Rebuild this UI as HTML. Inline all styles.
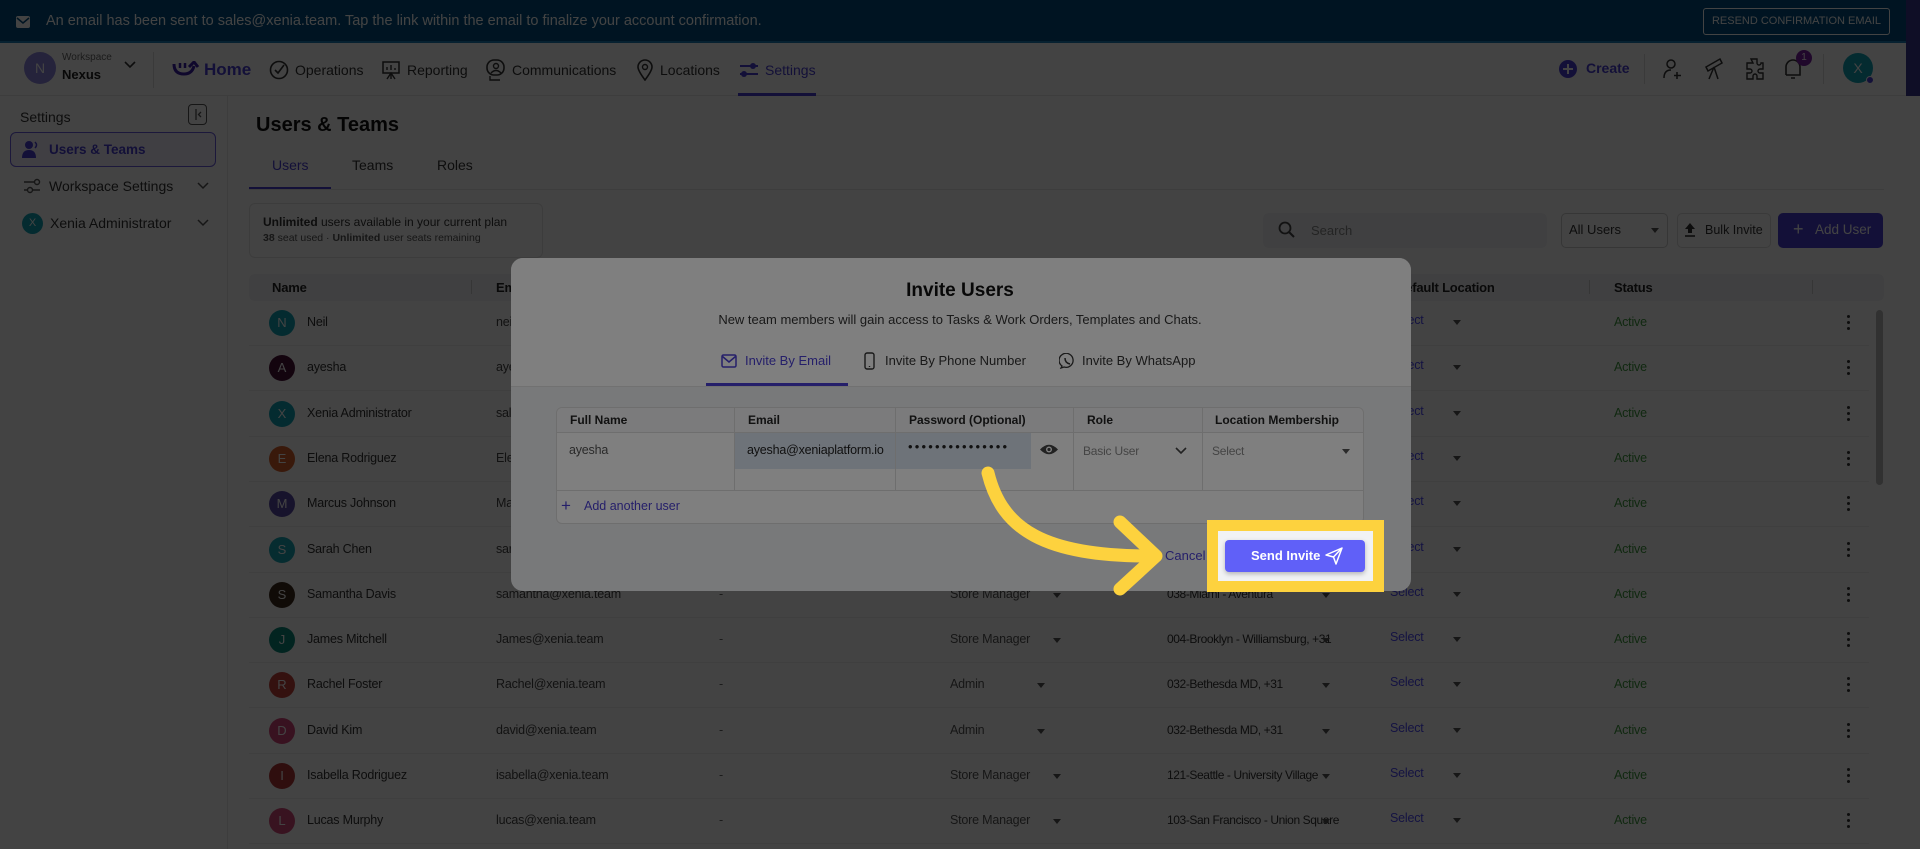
<!DOCTYPE html>
<html><head><meta charset="utf-8"><style>
*{box-sizing:border-box;margin:0;padding:0}
body{width:1920px;height:849px;overflow:hidden;background:#fff;font-family:"Liberation Sans",sans-serif;color:#212121;position:relative}
.a{position:absolute;white-space:nowrap}
.nav{font-size:14px;color:#333;top:62px}
.av{position:absolute;width:26px;height:26px;border-radius:50%;color:#fff;font-size:13px;text-align:center;line-height:26px}
.cell{position:absolute;font-size:12.5px;color:#333;white-space:nowrap;letter-spacing:-0.2px}
.tri{position:absolute;width:0;height:0;border-left:4px solid transparent;border-right:4px solid transparent;border-top:5px solid #555}
.mh{position:absolute;top:407px;height:26px;line-height:26px;font-size:12px;font-weight:bold;color:#222}
</style></head><body>

<!-- Banner -->
<div class="a" style="left:0;top:0;width:1920px;height:43px;background:#014f80;border-bottom:2px solid #1b7db5"></div>
<svg class="a" style="left:16px;top:16px" width="14" height="12"><rect x="0" y="0" width="14" height="12" rx="2" fill="#fff"/><path d="M1 2 L7 7 L13 2" stroke="#014f80" stroke-width="1.5" fill="none"/></svg>
<div class="a" style="left:46px;top:13px;font-size:14.5px;color:#fff">An email has been sent to sales@xenia.team. Tap the link within the email to finalize your account confirmation.</div>
<div class="a" style="left:1703px;top:8px;width:187px;height:27px;border:1px solid #fff;border-radius:3px;color:#fff;font-size:11px;text-align:center;line-height:25px">RESEND CONFIRMATION EMAIL</div>
<div class="a" style="left:1906px;top:0;width:14px;height:96px;background:#3a3590"></div>

<!-- Nav -->
<div class="a" style="left:0;top:43px;width:1906px;height:53px;background:#fff;border-bottom:1px solid #e6e6e6"></div>
<div class="a" style="left:24px;top:52px;width:32px;height:32px;border-radius:50%;background:#8f86e0;color:#fff;font-size:14px;text-align:center;line-height:32px">N</div>
<div class="a" style="left:62px;top:52px;font-size:10px;color:#666">Workspace</div>
<div class="a" style="left:62px;top:67px;font-size:13px;font-weight:bold">Nexus</div>
<svg class="a" style="left:124px;top:61px" width="12" height="8"><path d="M1 1 L6 6 L11 1" stroke="#333" stroke-width="1.6" fill="none"/></svg>
<div class="a" style="left:153px;top:52px;width:1px;height:36px;background:#ddd"></div>
<svg class="a" style="left:172px;top:61px" width="28" height="16"><path d="M2 3 Q2 13 12 13 Q20 13 22 5" stroke="#3c1fa8" stroke-width="3" fill="none"/><path d="M17 6 L22 1 L26 6" stroke="#3c1fa8" stroke-width="3" fill="none"/><path d="M8 2 v5 M13 2 v5" stroke="#3c1fa8" stroke-width="2.5"/></svg>
<div class="a" style="left:204px;top:60px;font-size:17px;color:#4b3fd4;font-weight:bold">Home</div>
<svg class="a" style="left:269px;top:60px" width="20" height="20"><circle cx="10" cy="10" r="8.5" stroke="#333" stroke-width="1.6" fill="none"/><path d="M6 10 L9 13 L15 5" stroke="#333" stroke-width="1.6" fill="none"/></svg>
<div class="a nav" style="left:295px">Operations</div>
<svg class="a" style="left:382px;top:60px" width="18" height="20"><rect x="1" y="2" width="16" height="11" stroke="#333" stroke-width="1.5" fill="none"/><path d="M5 10v-3M9 10v-5M13 10v-2M9 13v6M5 19l4-6 4 6" stroke="#333" stroke-width="1.4" fill="none"/></svg>
<div class="a nav" style="left:407px">Reporting</div>
<svg class="a" style="left:486px;top:59px" width="20" height="22"><rect x="1" y="1" width="17" height="15" rx="7" stroke="#333" stroke-width="1.6" fill="none"/><circle cx="10" cy="7" r="2.5" stroke="#333" stroke-width="1.4" fill="none"/><path d="M5 14 Q10 9 15 14 M4 17v4h10" stroke="#333" stroke-width="1.4" fill="none"/></svg>
<div class="a nav" style="left:512px">Communications</div>
<svg class="a" style="left:637px;top:59px" width="16" height="22"><path d="M8 21 C2 13 1 10 1 8 A7 7 0 0 1 15 8 C15 10 14 13 8 21Z" stroke="#333" stroke-width="1.6" fill="none"/><circle cx="8" cy="8" r="2.5" stroke="#333" stroke-width="1.4" fill="none"/></svg>
<div class="a nav" style="left:660px">Locations</div>
<svg class="a" style="left:739px;top:61px" width="20" height="18"><path d="M1 5h18M1 13h18" stroke="#4b3fd4" stroke-width="2"/><circle cx="14" cy="5" r="3" fill="#4b3fd4"/><circle cx="5" cy="13" r="3" fill="#4b3fd4"/></svg>
<div class="a nav" style="left:765px;color:#4b3fd4">Settings</div>
<div class="a" style="left:738px;top:93px;width:78px;height:3px;background:#4b3fd4"></div>

<svg class="a" style="left:1559px;top:60px" width="18" height="18"><circle cx="9" cy="9" r="9" fill="#4b3fd4"/><path d="M9 4v10M4 9h10" stroke="#fff" stroke-width="2"/></svg>
<div class="a" style="left:1586px;top:60px;font-size:14px;font-weight:bold;color:#4b3fd4">Create</div>
<div class="a" style="left:1644px;top:54px;width:1px;height:30px;background:#ddd"></div>
<svg class="a" style="left:1662px;top:58px" width="22" height="22"><circle cx="9" cy="6" r="4" stroke="#333" stroke-width="1.5" fill="none"/><path d="M2 20 Q2 12 9 12 M15 14v7M12 17.5h7" stroke="#333" stroke-width="1.5" fill="none"/></svg>
<svg class="a" style="left:1703px;top:57px" width="22" height="24"><path d="M3 10 L17 2 L19 6 L5 14Z M11 10 L6 22 M11 10 L15 22" stroke="#333" stroke-width="1.5" fill="none"/></svg>
<svg class="a" style="left:1743px;top:57px" width="22" height="24"><path d="M8 2 h6 v4 a2 2 0 0 0 4 0 h2 v6 h-3 a2 2 0 0 0 0 4 h3 v6 h-6 v-3 a2 2 0 0 0 -4 0 v3 h-6 v-6 h3 a2 2 0 0 0 0 -4 h-3 v-6 h6Z" stroke="#333" stroke-width="1.4" fill="none"/></svg>
<svg class="a" style="left:1783px;top:57px" width="20" height="24"><path d="M3 18 V10 A7 7 0 0 1 17 10 V18 H3 M8 21h4" stroke="#333" stroke-width="1.6" fill="none"/></svg>
<div class="a" style="left:1796px;top:50px;width:16px;height:16px;border-radius:50%;background:#7b1fa2;color:#fff;font-size:10px;text-align:center;line-height:16px">1</div>
<div class="a" style="left:1823px;top:54px;width:1px;height:30px;background:#ddd"></div>
<div class="a" style="left:1843px;top:53px;width:30px;height:30px;border-radius:50%;background:#12a4b8;color:#fff;font-size:14px;text-align:center;line-height:30px">X</div>
<div class="a" style="left:1866px;top:76px;width:8px;height:8px;border-radius:50%;background:#4b3fd4;border:1px solid #fff"></div>

<!-- Sidebar -->
<div class="a" style="left:227px;top:96px;width:1px;height:753px;background:#e6e6e6"></div>
<div class="a" style="left:20px;top:109px;font-size:14px;color:#333">Settings</div>
<div class="a" style="left:188px;top:104px;width:19px;height:21px;border:1.5px solid #555;border-radius:4px"></div>
<svg class="a" style="left:193px;top:109px" width="10" height="11"><path d="M3 0v11M8 3 L5.5 5.5 L8 8" stroke="#555" stroke-width="1.3" fill="none"/></svg>
<div class="a" style="left:10px;top:132px;width:206px;height:35px;border:1.5px solid #6a5de0;border-radius:6px;background:#f1efff"></div>
<svg class="a" style="left:22px;top:140px" width="18" height="18"><circle cx="7" cy="5" r="4" fill="#4b3fd4"/><path d="M0 18 Q0 10 7 10 Q14 10 14 18Z" fill="#4b3fd4"/><path d="M13 2 Q16 5 13 8" stroke="#4b3fd4" stroke-width="1.5" fill="none"/></svg>
<div class="a" style="left:49px;top:142px;font-size:13.5px;font-weight:bold;color:#4b3fd4">Users &amp; Teams</div>
<svg class="a" style="left:23px;top:178px" width="18" height="16"><path d="M1 4h10M1 12h3" stroke="#555" stroke-width="1.5"/><circle cx="14" cy="4" r="2.5" stroke="#555" stroke-width="1.4" fill="none"/><circle cx="7" cy="12" r="2.5" stroke="#555" stroke-width="1.4" fill="none"/><path d="M10 12h7" stroke="#555" stroke-width="1.5"/></svg>
<div class="a" style="left:49px;top:178px;font-size:14px;color:#333">Workspace Settings</div>
<svg class="a" style="left:197px;top:182px" width="12" height="8"><path d="M1 1 L6 6 L11 1" stroke="#555" stroke-width="1.5" fill="none"/></svg>
<div class="a" style="left:22px;top:213px;width:21px;height:21px;border-radius:50%;background:#12a4b8;color:#fff;font-size:11px;text-align:center;line-height:21px">X</div>
<div class="a" style="left:50px;top:215px;font-size:14px;color:#333">Xenia Administrator</div>
<svg class="a" style="left:197px;top:219px" width="12" height="8"><path d="M1 1 L6 6 L11 1" stroke="#555" stroke-width="1.5" fill="none"/></svg>

<!-- Main -->
<div class="a" style="left:256px;top:114px;font-size:20px;font-weight:bold;color:#111">Users &amp; Teams</div>
<div class="a" style="left:272px;top:157px;font-size:14px;color:#4b3fd4">Users</div>
<div class="a" style="left:352px;top:157px;font-size:14px;color:#333">Teams</div>
<div class="a" style="left:437px;top:157px;font-size:14px;color:#333">Roles</div>
<div class="a" style="left:249px;top:187px;width:82px;height:3px;background:#4b3fd4"></div>
<div class="a" style="left:249px;top:189px;width:1635px;height:1px;background:#e6e6e6"></div>
<div class="a" style="left:249px;top:203px;width:294px;height:55px;border:1px solid #e4e4e4;border-radius:6px"></div>
<div class="a" style="left:263px;top:215px;font-size:12px;color:#333"><b>Unlimited</b> users available in your current plan</div>
<div class="a" style="left:263px;top:232px;font-size:10.5px;color:#555"><b>38</b> seat used · <b>Unlimited</b> user seats remaining</div>

<div class="a" style="left:1263px;top:213px;width:284px;height:35px;background:#f2f4f6;border-radius:6px"></div>
<svg class="a" style="left:1278px;top:221px" width="18" height="18"><circle cx="7" cy="7" r="5.5" stroke="#444" stroke-width="1.8" fill="none"/><path d="M11 11 L16 16" stroke="#444" stroke-width="2"/></svg>
<div class="a" style="left:1311px;top:223px;font-size:13px;color:#888">Search</div>
<div class="a" style="left:1561px;top:213px;width:107px;height:35px;border:1px solid #ccc;border-radius:5px"></div>
<div class="a" style="left:1569px;top:222px;font-size:13px;color:#333">All Users</div>
<div class="tri" style="left:1651px;top:228px"></div>
<div class="a" style="left:1677px;top:213px;width:94px;height:35px;border:1px solid #ddd;border-radius:5px"></div>
<svg class="a" style="left:1684px;top:222px" width="12" height="16"><path d="M6 1 L1 7 H4 V11 H8 V7 H11Z" fill="#333"/><path d="M1 14h10" stroke="#333" stroke-width="1.6"/></svg>
<div class="a" style="left:1705px;top:223px;font-size:12.5px;color:#333">Bulk Invite</div>
<div class="a" style="left:1778px;top:213px;width:105px;height:35px;background:#4b3fd4;border-radius:5px"></div>
<div class="a" style="left:1793px;top:219px;font-size:18px;color:#fff">+</div>
<div class="a" style="left:1815px;top:222px;font-size:13.5px;color:#fff">Add User</div>

<!-- Table header -->
<div class="a" style="left:249px;top:274px;width:1635px;height:27px;background:#f3f4f6;border-radius:6px"></div>
<div class="cell" style="left:272px;top:280px;font-weight:bold;color:#222;font-size:13px">Name</div>
<div class="a" style="left:471px;top:280px;width:1px;height:14px;background:#ccc"></div>
<div class="cell" style="left:496px;top:280px;font-weight:bold;color:#222;font-size:13px">Email</div>
<div class="cell" style="left:1396px;top:280px;font-weight:bold;color:#222;font-size:13px">Default Location</div>
<div class="a" style="left:1589px;top:280px;width:1px;height:14px;background:#ccc"></div>
<div class="cell" style="left:1614px;top:280px;font-weight:bold;color:#222;font-size:13px">Status</div>
<div class="a" style="left:1812px;top:280px;width:1px;height:14px;background:#ccc"></div>
<div class="a" style="left:1876px;top:310px;width:7px;height:175px;background:#bbb;border-radius:4px"></div>

<div id="rows"></div>
<script>
var R=[["N","#12a4b8","Neil","neil@xenia.team","","",""],
["A","#4a1038","ayesha","ayesha@xenia.team","","",""],
["X","#12a4b8","Xenia Administrator","sales@xenia.team","","",""],
["E","#d8602a","Elena Rodriguez","Elena@xenia.team","","",""],
["M","#5a4aa6","Marcus Johnson","Marcus@xenia.team","","",""],
["S","#19a6b6","Sarah Chen","sarah@xenia.team","","",""],
["S","#3d2a1c","Samantha Davis","samantha@xenia.team","Store Manager","038-Miami - Aventura",1053],
["J","#098a7a","James Mitchell","James@xenia.team","Store Manager","004-Brooklyn - Williamsburg, +31",1053],
["R","#c4423c","Rachel Foster","Rachel@xenia.team","Admin","032-Bethesda MD, +31",1037],
["D","#d6457c","David Kim","david@xenia.team","Admin","032-Bethesda MD, +31",1037],
["I","#b23636","Isabella Rodriguez","isabella@xenia.team","Store Manager","121-Seattle - University Village",1053],
["L","#d44a7c","Lucas Murphy","lucas@xenia.team","Store Manager","103-San Francisco - Union Square",1053]];
var h="";
R.forEach(function(r,i){var c=323+i*45.3;
h+='<div class="av" style="left:269px;top:'+(c-13)+'px;background:'+r[1]+'">'+r[0]+'</div>';
h+='<div class="cell" style="left:307px;top:'+(c-8)+'px">'+r[2]+'</div>';
h+='<div class="cell" style="left:496px;top:'+(c-8)+'px;color:#444">'+r[3]+'</div>';
h+='<div class="cell" style="left:719px;top:'+(c-8)+'px;color:#666">-</div>';
if(r[4]){h+='<div class="cell" style="left:950px;top:'+(c-8)+'px;color:#555">'+r[4]+'</div><div class="tri" style="left:'+r[6]+'px;top:'+(c-2)+'px"></div>';
h+='<div class="cell" style="left:1167px;top:'+(c-8)+'px;font-size:12px;letter-spacing:-0.4px">'+r[5]+'</div><div class="tri" style="left:1322px;top:'+(c-2)+'px"></div>';}
h+='<div class="cell" style="left:1390px;top:'+(c-10)+'px;color:#4e48fa">Select</div><div class="tri" style="left:1453px;top:'+(c-3)+'px"></div>';
h+='<div class="cell" style="left:1614px;top:'+(c-8)+'px;color:#3f9a3f">Active</div>';
h+='<div class="a" style="left:1847px;top:'+(c-8)+'px;width:3px;height:3px;background:#333;border-radius:50%;box-shadow:0 6px 0 #333,0 12px 0 #333"></div>';
h+='<div class="a" style="left:249px;top:'+(c+22)+'px;width:1620px;height:1px;background:#eee"></div>';});
document.getElementById("rows").innerHTML=h;
</script>

<!-- Backdrop -->
<div class="a" style="left:0;top:0;width:1920px;height:849px;background:rgba(0,0,0,0.47)"></div>

<!-- Modal -->
<div class="a" style="left:511px;top:258px;width:900px;height:333px;background:#f1f2f4;border-radius:12px;overflow:hidden">
 <div class="a" style="left:0;top:0;width:900px;height:129px;background:#fff;border-bottom:1px solid #e2e2e2"></div>
</div>
<div class="a" style="left:0;top:280px;width:1920px;text-align:center;font-size:19px;font-weight:bold;color:#111">Invite Users</div>
<div class="a" style="left:0;top:312px;width:1920px;text-align:center;font-size:13px;color:#333">New team members will gain access to Tasks &amp; Work Orders, Templates and Chats.</div>
<svg class="a" style="left:721px;top:354px" width="16" height="14"><rect x="1" y="1" width="14" height="12" rx="1.5" stroke="#4b3fd4" stroke-width="1.5" fill="none"/><path d="M1.5 2.5 L8 8 L14.5 2.5" stroke="#4b3fd4" stroke-width="1.5" fill="none"/></svg>
<div class="a" style="left:745px;top:353px;font-size:13px;color:#4b3fd4">Invite By Email</div>
<div class="a" style="left:706px;top:383px;width:142px;height:3px;background:#4b3fd4"></div>
<svg class="a" style="left:864px;top:352px" width="11" height="18"><rect x="1" y="1" width="9" height="16" rx="2" stroke="#333" stroke-width="1.4" fill="none"/><path d="M5.5 14v1" stroke="#333" stroke-width="1.4"/></svg>
<div class="a" style="left:885px;top:353px;font-size:13px;color:#333">Invite By Phone Number</div>
<svg class="a" style="left:1059px;top:353px" width="16" height="16"><path d="M3 13 L2 15 L5 14 A7 7 0 1 0 3 13Z" stroke="#333" stroke-width="1.3" fill="none"/><path d="M6 5 Q6 10 11 11" stroke="#333" stroke-width="1.5" fill="none"/></svg>
<div class="a" style="left:1082px;top:353px;font-size:13px;color:#333">Invite By WhatsApp</div>

<div class="a" style="left:556px;top:407px;width:808px;height:117px;background:#fff;border:1px solid #ddd;border-radius:6px"></div>
<div class="a" style="left:557px;top:408px;width:806px;height:25px;background:#f6f7f9;border-radius:6px 6px 0 0;border-bottom:1px solid #ddd"></div>
<div class="a" style="left:734px;top:433px;width:297px;height:36px;background:#dde6f2"></div>
<div class="a" style="left:557px;top:490px;width:806px;height:1px;background:#ddd"></div>
<div class="a" style="left:734px;top:408px;width:1px;height:82px;background:#ddd"></div>
<div class="a" style="left:895px;top:408px;width:1px;height:82px;background:#ddd"></div>
<div class="a" style="left:1073px;top:408px;width:1px;height:82px;background:#ddd"></div>
<div class="a" style="left:1202px;top:408px;width:1px;height:82px;background:#ddd"></div>
<div class="mh" style="left:570px">Full Name</div>
<div class="mh" style="left:748px">Email</div>
<div class="mh" style="left:909px">Password (Optional)</div>
<div class="mh" style="left:1087px">Role</div>
<div class="mh" style="left:1215px">Location Membership</div>
<div class="cell" style="left:569px;top:443px;font-size:12.5px;color:#555">ayesha</div>
<div class="cell" style="left:747px;top:443px;font-size:12.5px;color:#222;width:148px;overflow:hidden">ayesha@xeniaplatform.io</div>
<div class="cell" style="left:908px;top:439px;font-size:13px;color:#222;letter-spacing:2.2px">•••••••••••••••</div>
<svg class="a" style="left:1039px;top:443px" width="20" height="13"><path d="M1 6.5 Q10 -3 19 6.5 Q10 16 1 6.5Z" fill="#444"/><circle cx="10" cy="6.5" r="3" fill="#fff"/><circle cx="10" cy="6.5" r="1.6" fill="#444"/></svg>
<div class="cell" style="left:1083px;top:444px;font-size:12px;color:#888">Basic User</div>
<svg class="a" style="left:1175px;top:447px" width="12" height="8"><path d="M1 1 L6 6 L11 1" stroke="#444" stroke-width="1.6" fill="none"/></svg>
<div class="cell" style="left:1212px;top:444px;font-size:12px;color:#888">Select</div>
<div class="tri" style="left:1342px;top:449px"></div>
<div class="a" style="left:561px;top:496px;font-size:17px;color:#4b3fd4">+</div>
<div class="a" style="left:584px;top:499px;font-size:12.5px;color:#4b3fd4">Add another user</div>
<div class="a" style="left:1165px;top:548px;font-size:13px;color:#4b3fd4">Cancel</div>

<!-- Spotlight -->
<div class="a" style="left:1207px;top:520px;width:177px;height:72px;border:11px solid #fdd23e;box-shadow:0 0 0 4000px rgba(0,0,0,0.5)"></div>
<div class="a" style="left:1225px;top:540px;width:140px;height:32px;background:#6060f8;border-radius:4px;box-shadow:0 2px 5px rgba(0,0,0,0.25)"></div>
<div class="a" style="left:1251px;top:548px;font-size:13px;font-weight:bold;color:#fff">Send Invite</div>
<svg class="a" style="left:1325px;top:547px" width="18" height="18"><path d="M1 8 L17 1 L11 17 L8.5 10Z M8.5 10 L17 1" stroke="#fff" stroke-width="1.5" fill="none" stroke-linejoin="round"/></svg>

<!-- Arrow -->
<svg class="a" style="left:0;top:0" width="1920" height="849"><path d="M988 473 C1002 530 1045 556 1150 556" stroke="#fdd23e" stroke-width="13" fill="none" stroke-linecap="round"/><path d="M1120 522 L1156 556 L1120 589" stroke="#fdd23e" stroke-width="13" fill="none" stroke-linecap="round" stroke-linejoin="round"/></svg>
</body></html>
